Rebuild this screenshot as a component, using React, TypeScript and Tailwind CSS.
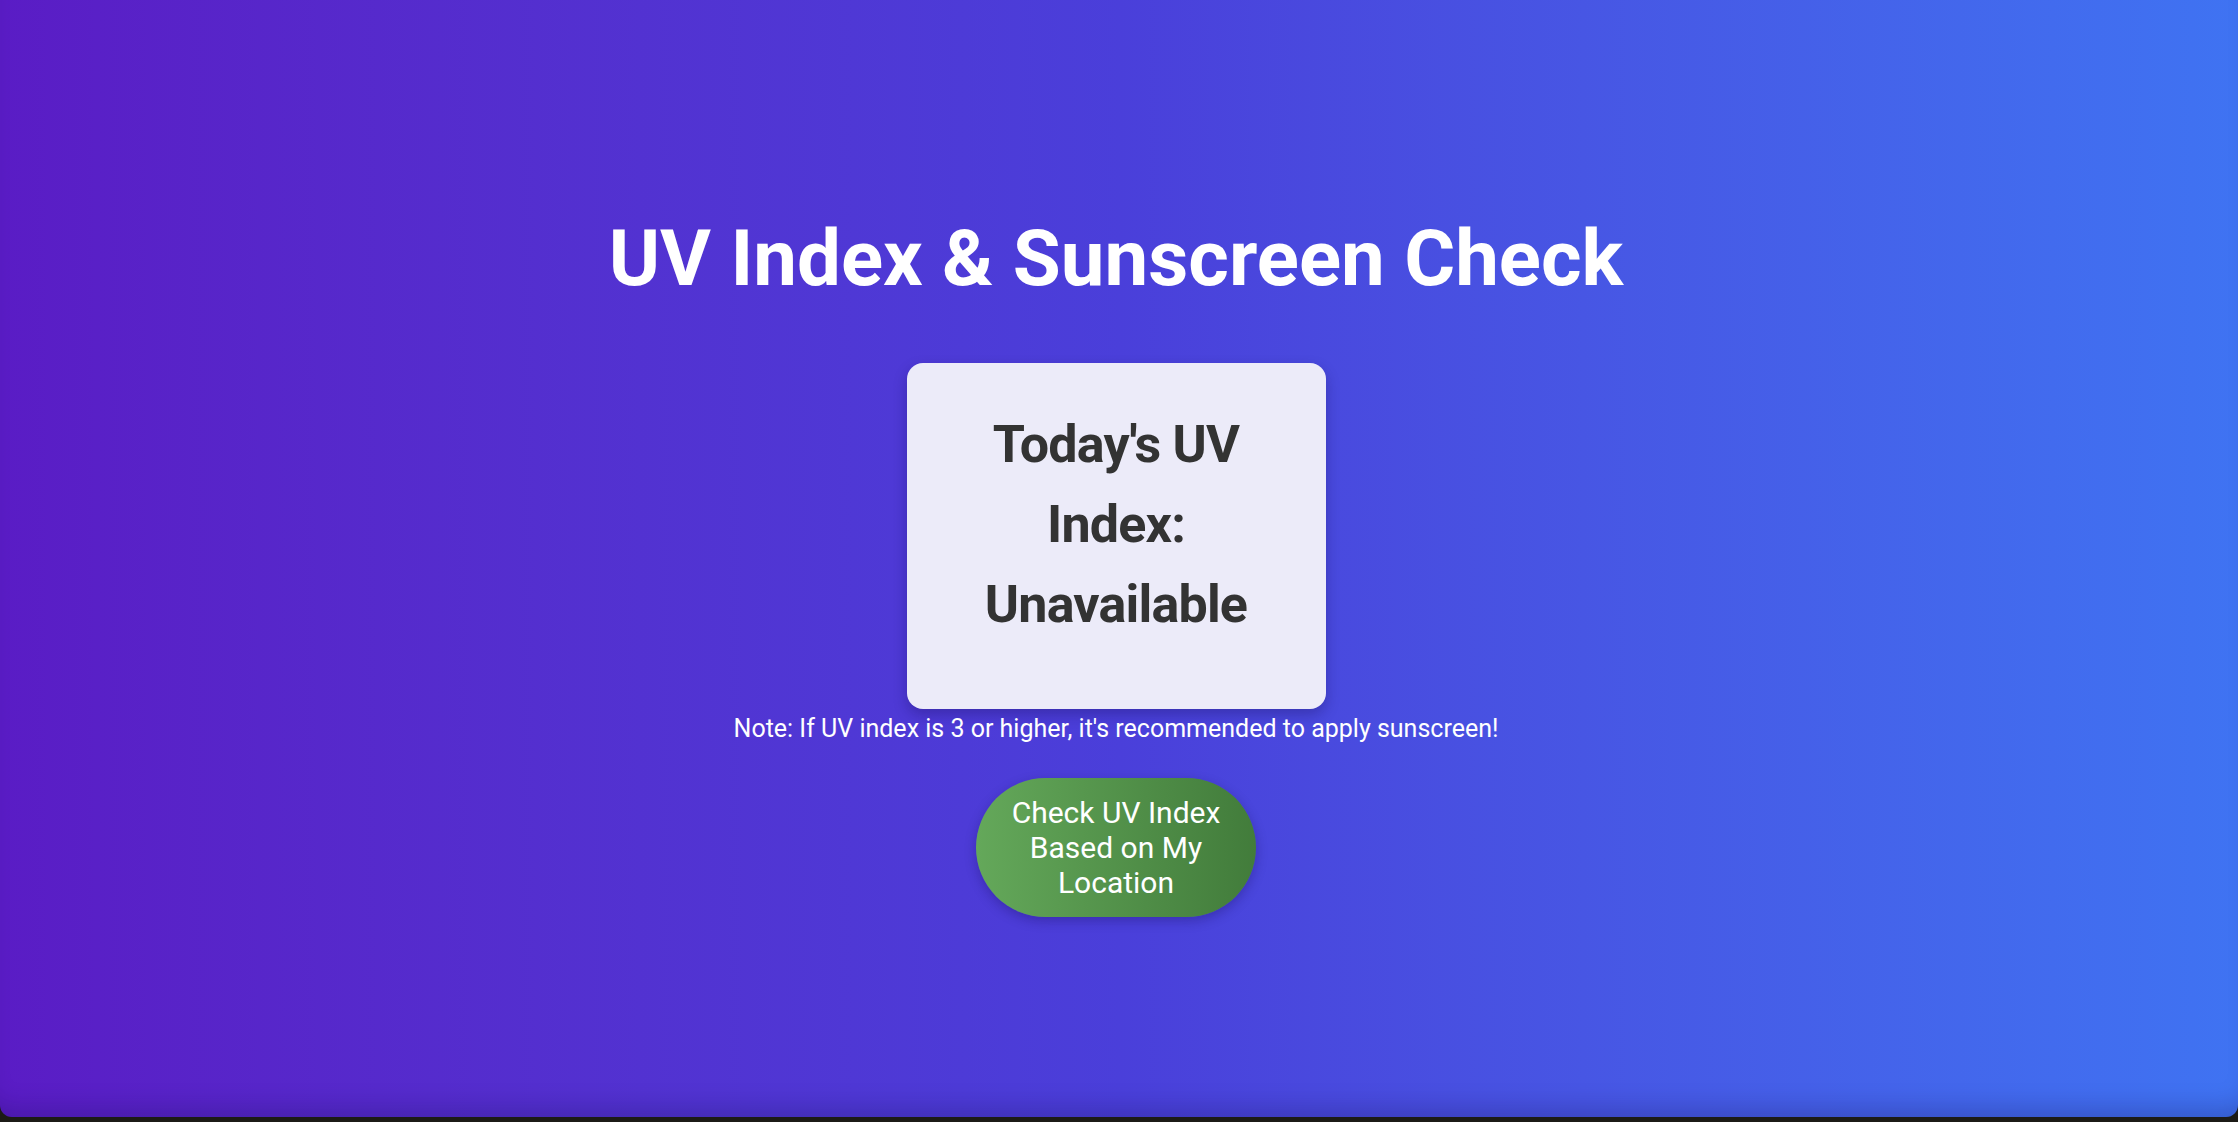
export default function App() {
    return (
        <div className="h-[1122px] w-full bg-[#1c1b16] flex flex-col overflow-hidden">
            {/* page area */}
            <main className="h-[1117px] w-full rounded-b-[12px] bg-linear-to-r from-[#5a1cc5] via-[#4a3fda] to-[#3f73f2] shadow-[inset_0_-24px_24px_-16px_rgba(20,10,80,0.25)] flex flex-col items-center pr-[6px] font-['Roboto',sans-serif]">
                <h1 className="mt-[212px] text-[78px] leading-[94px] font-bold text-white">UV Index &amp; Sunscreen Check</h1>

                {/* uv card */}
                <div className="mt-[57px] w-[419px] rounded-[16px] bg-[#ecebf9] px-[40px] pt-[42px] pb-[64px] shadow-[0_6px_14px_rgba(20,10,80,0.3)]">
                    <h2 className="text-center text-[52px] leading-[80px] font-bold tracking-[-0.8px] text-[#333333]">Today's UV Index: Unavailable</h2>
                </div>

                <p className="mt-[6px] text-[25px] leading-[28px] text-white">Note: If UV index is 3 or higher, it's recommended to apply sunscreen!</p>

                <button className="mt-[35px] w-[280px] rounded-full bg-linear-to-r from-[#64a85a] to-[#427c3b] px-[30px] py-[17px] text-center text-[30px] leading-[35px] text-white shadow-[0_4px_12px_rgba(20,10,80,0.3)]">
                    Check UV Index Based on My Location
                </button>
            </main>
        </div>
    )
}
